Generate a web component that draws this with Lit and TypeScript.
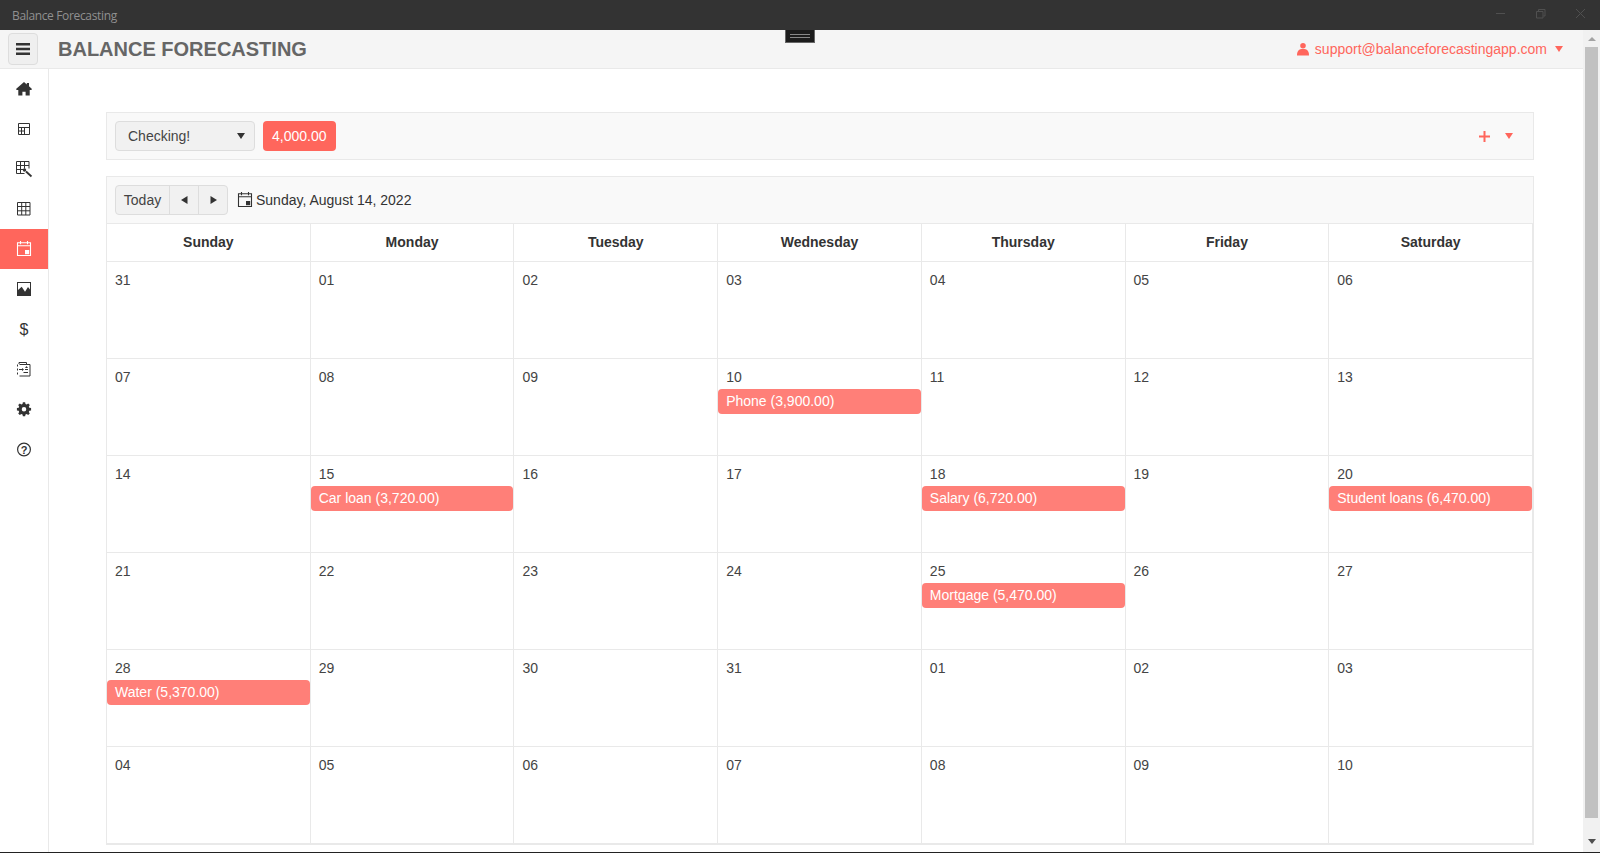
import { LitElement, html, css, svg } from "lit";
import { customElement } from "lit/decorators.js";

const DAYS = ["Sunday", "Monday", "Tuesday", "Wednesday", "Thursday", "Friday", "Saturday"];
const NUMS = [
  "31","01","02","03","04","05","06",
  "07","08","09","10","11","12","13",
  "14","15","16","17","18","19","20",
  "21","22","23","24","25","26","27",
  "28","29","30","31","01","02","03",
  "04","05","06","07","08","09","10",
];
const EVENTS: Record<number, string> = {
  10: "Phone (3,900.00)",
  15: "Car loan (3,720.00)",
  18: "Salary (6,720.00)",
  20: "Student loans (6,470.00)",
  25: "Mortgage (5,470.00)",
  28: "Water (5,370.00)",
};

const CALENDAR = svg`<path fill="none" stroke="currentColor" stroke-width="1.100" d="M1.500 1.800h13v12.700h-13zM1.500 4.800h13M4.500 0v3.300M11.500 0v3.300"/><path fill="currentColor" d="M9 9h4.200v4.200H9z"/>`;

const ICONS = [
  svg`<path fill="currentColor" d="M8 1 10.800 3.400V2h2.200v3.300L16 8.100 15.300 9H13.700V14.500H9.600v-3.700H6.400v3.700H2.300V9H.7L0 8.100z"/>`,
  svg`<path fill="none" stroke="currentColor" d="M2.500 2.500h11v11h-11zM2.500 6.500h11M2.500 10h6M5.500 6.500v7M8.500 6.500v7"/>`,
  svg`<path fill="none" stroke="currentColor" d="M8.500 12.500H.5v-12h12.500v7M.5 4.500h12.500M.5 8.500h7M4.500.5v12M8.500.5v7"/><circle cx="8.500" cy="9" r="1.700" fill="currentColor"/><path stroke="currentColor" stroke-width="1.800" d="M10 10.500 15.500 15.500"/>`,
  svg`<path fill="none" stroke="currentColor" d="M1.500 1.500h12.500v12.500h-12.500zM1.500 5.500h12.500M1.500 9.800h12.500M5.700 1.500v12.500M9.800 1.500v12.500"/>`,
  CALENDAR,
  svg`<path fill="currentColor" fill-rule="evenodd" d="M1 1h14v14H1zM2 2V9L5.700 5.700 9 10.700 12 6l2 2.500V2z"/>`,
  svg`<text x="8" y="13.500" text-anchor="middle" font-family="Liberation Sans, sans-serif" font-size="16" fill="currentColor">$</text>`,
  svg`<path fill="none" stroke="currentColor" d="M3 3V1.500h7.500V3M3.500 3.500h10.500v11.500H3.500M1.500 3.500v2M1.500 7.500v2M1.500 11.500v2"/><path stroke="currentColor" d="M3 8.500h4M7.500 11.500h4.500M9 8.500h3"/><path fill="currentColor" d="M6 7l2 1.500L6 10zM10.500 5l1.500 2H9z"/>`,
  svg`<path fill="currentColor" fill-rule="evenodd" transform="translate(1 .3) scale(.875)" d="M6.700 1h2.600l.4 2 1.300.6 1.800-1.100 1.800 1.800-1.100 1.800.6 1.300 2 .4v2.600l-2 .4-.6 1.300 1.100 1.800-1.800 1.800-1.800-1.100-1.300.6-.4 2H6.700l-.4-2-1.300-.6-1.800 1.100-1.800-1.800 1.100-1.800-.6-1.300-2-.4V7.800l2-.4.6-1.300-1.100-1.800 1.800-1.800 1.800 1.100 1.300-.6zM8 6.400a2.600 2.600 0 1 0 0 5.200 2.600 2.600 0 0 0 0-5.200z"/>`,
  svg`<circle cx="8" cy="8.500" r="6.400" fill="none" stroke="currentColor" stroke-width="1.200"/><text x="8" y="12.500" text-anchor="middle" font-family="Liberation Sans, sans-serif" font-weight="700" font-size="11" fill="currentColor">?</text>`,
];

@customElement("app-root")
export class AppRoot extends LitElement {
  static styles = css`
    :host {
      display: flex;
      flex-direction: column;
      height: 853px;
      overflow: hidden;
      position: relative;
      font-family: "Liberation Sans", Arial, sans-serif;
      font-size: 14px;
      color: #333;
      background: #fff;
    }
    .titlebar {
      height: 30px;
      flex: none;
      background: #333;
      display: flex;
      align-items: center;
      padding-left: 12px;
      font: 12px "Open Sans", sans-serif;
      letter-spacing: -0.35px;
      color: #909090;
    }
    .win { margin-left: auto; display: flex; }
    .win svg { width: 40px; height: 30px; display: block; }
    .app { flex: 1; display: flex; min-height: 0; }
    .main { flex: 1; display: flex; flex-direction: column; min-width: 0; }
    .header {
      height: 39px;
      flex: none;
      box-sizing: border-box;
      background: #f5f5f5;
      border-bottom: 1px solid #e9e9e9;
      display: flex;
      align-items: center;
      padding: 0 20px 0 8px;
    }
    .burger {
      width: 30px;
      height: 32px;
      box-sizing: border-box;
      border: 1px solid #ddd;
      border-radius: 4px;
      background: #efefef;
      display: flex;
      align-items: center;
      justify-content: center;
    }
    .burger svg { width: 14px; height: 14px; display: block; }
    .brand {
      margin-left: 20px;
      font-size: 20px;
      font-weight: 700;
      color: #666;
    }
    .user {
      margin-left: auto;
      display: flex;
      align-items: center;
      color: #ff665c;
    }
    .user svg { width: 12px; height: 14px; margin-right: 6px; }
    .caret { width: 0; height: 0; border-style: solid; border-width: 6px 4px 0; border-color: #ff665c transparent transparent; }
    .user .caret { margin-left: 8px; }
    .content { flex: 1; display: flex; min-height: 0; }
    .side {
      width: 49px;
      flex: none;
      box-sizing: border-box;
      border-right: 1px solid #e9e9e9;
    }
    .nav {
      height: 40px;
      display: flex;
      align-items: center;
      justify-content: center;
      color: #333;
    }
    .nav svg { width: 16px; height: 16px; display: block; overflow: visible; }
    .nav.on { background: #ff665c; color: #fff; }
    .page {
      flex: 1;
      min-width: 0;
      padding: 43px 49px 0 57px;
    }
    .bar {
      box-sizing: border-box;
      border: 1px solid #e9e9e9;
      background: #f9f9f9;
      display: flex;
      align-items: center;
      padding: 0 8px;
    }
    .top { height: 48px; gap: 8px; }
    .select {
      width: 140px;
      height: 30px;
      box-sizing: border-box;
      border: 1px solid #ddd;
      border-radius: 4px;
      background: #f1f1f1;
      display: flex;
      align-items: center;
      justify-content: space-between;
      padding: 0 9px 0 12px;
      color: #444;
    }
    .select .caret { border-color: #333 transparent transparent; }
    .badge {
      height: 30px;
      padding: 0 9px;
      display: flex;
      align-items: center;
      border-radius: 4px;
      background: #ff665c;
      color: #fff;
    }
    .tools { margin-left: auto; display: flex; align-items: center; gap: 15px; padding-right: 12px; }
    .tools svg { width: 11px; height: 11px; display: block; }
    .calendar { margin-top: 16px; }
    .nav-bar { height: 48px; }
    .group {
      display: flex;
      height: 30px;
      box-sizing: border-box;
      border: 1px solid #ddd;
      border-radius: 4px;
      background: #f1f1f1;
      color: #444;
    }
    .group > div { display: flex; align-items: center; justify-content: center; box-sizing: border-box; }
    .group .today { width: 53px; }
    .group .arrow { width: 29px; border-left: 1px solid #ddd; }
    .group svg { width: 7px; height: 8px; }
    .date { display: flex; align-items: center; margin-left: 9px; color: #333; }
    .date svg { width: 16px; height: 16px; margin-right: 3px; }
    .grid {
      box-sizing: border-box;
      display: grid;
      grid-template-columns: repeat(7, 1fr);
      border: solid #e9e9e9;
      border-width: 0 1px 1px 1px;
    }
    .head {
      height: 38px;
      box-sizing: border-box;
      display: flex;
      align-items: center;
      justify-content: center;
      font-weight: 700;
      padding-bottom: 2px;
      border-bottom: 1px solid #e9e9e9;
      border-right: 1px solid #e9e9e9;
    }
    .cell {
      height: 97px;
      box-sizing: border-box;
      border-right: 1px solid #e9e9e9;
      border-bottom: 1px solid #e9e9e9;
      padding-top: 8px;
      line-height: 20px;
      color: #444;
    }
    .num { padding-left: 8px; height: 22px; }
    .event {
      height: 25px;
      padding-left: 8px;
      border-radius: 4px;
      background: #ff7f78;
      color: #fff;
      line-height: 24px;
    }
    .scroll {
      width: 17px;
      flex: none;
      background: #f1f1f1;
      display: flex;
      flex-direction: column;
      align-items: center;
    }
    .scroll .up, .scroll .down { width: 0; height: 0; border-style: solid; }
    .scroll .up { border-width: 0 4px 4px; border-color: transparent transparent #a3a3a3; margin-top: 7px; }
    .thumb { width: 13px; height: 771px; margin-top: 6px; background: #c1c1c1; }
    .scroll .down { border-width: 5px 4px 0; border-color: #505050 transparent transparent; margin-top: 21px; }
    .baseline { height: 1px; flex: none; background: #222; }
    .handle {
      position: absolute;
      left: 785px;
      top: 30px;
      width: 30px;
      height: 13px;
      box-sizing: border-box;
      background: #1c1c1c;
      border: 1px solid #666;
      border-top-width: 0;
      display: flex;
      flex-direction: column;
      align-items: center;
      justify-content: center;
      gap: 2px;
    }
    .handle i { display: block; width: 20px; height: 1px; background: #888; }
  `;

  render() {
    return html`
      <div class="titlebar">
        Balance Forecasting
        <div class="win">
          <svg viewBox="0 0 40 30"><path stroke="#505050" d="M16 13.500h9"/></svg>
          <svg viewBox="0 0 40 30"><path fill="none" stroke="#505050" d="M16.500 11.500h6.500v6.500h-6.500zM18.500 11V9.500h6.500v6.500h-1.500"/></svg>
          <svg viewBox="0 0 40 30"><path stroke="#505050" d="M16 9l9 9M25 9l-9 9"/></svg>
        </div>
      </div>
      <div class="app">
        <div class="main">
          <div class="header">
            <div class="burger">
              <svg viewBox="0 0 14 14"><path fill="#333" d="M0 1h14v2.500H0zM0 5.800h14v2.500H0zM0 10.500h14V13H0z"/></svg>
            </div>
            <div class="brand">BALANCE FORECASTING</div>
            <div class="user">
              <svg viewBox="0 0 13 14"><circle cx="6.500" cy="3.500" r="3" fill="#ff665c"/><path fill="#ff665c" d="M0 14c0-5 2-7 6.500-7s6.500 2 6.500 7z"/></svg>
              support@balanceforecastingapp.com
              <span class="caret"></span>
            </div>
          </div>
          <div class="content">
            <nav class="side">
              ${ICONS.map(
                (icon, i) => html`<div class="nav ${i === 4 ? "on" : ""}"><svg viewBox="0 0 16 16">${icon}</svg></div>`
              )}
            </nav>
            <main class="page">
              <div class="bar top">
                <div class="select">Checking!<span class="caret"></span></div>
                <div class="badge">4,000.00</div>
                <div class="tools">
                  <svg viewBox="0 0 11 11"><path stroke="#ff665c" stroke-width="2" d="M5.500 0v11M0 5.500h11"/></svg>
                  <span class="caret"></span>
                </div>
              </div>
              <div class="calendar">
                <div class="bar nav-bar">
                  <div class="group">
                    <div class="today">Today</div>
                    <div class="arrow"><svg viewBox="0 0 7 8"><path fill="#333" d="M6.500 0v8L0 4z"/></svg></div>
                    <div class="arrow"><svg viewBox="0 0 7 8"><path fill="#333" d="M.500 0v8L7 4z"/></svg></div>
                  </div>
                  <div class="date">
                    <svg viewBox="0 0 16 16">${CALENDAR}</svg>
                    Sunday, August 14, 2022
                  </div>
                </div>
                <div class="grid">
                  ${DAYS.map((d) => html`<div class="head">${d}</div>`)}
                  ${NUMS.map(
                    (n, i) => html`<div class="cell">
                      <div class="num">${n}</div>
                      ${EVENTS[i] ? html`<div class="event">${EVENTS[i]}</div>` : ""}
                    </div>`
                  )}
                </div>
              </div>
            </main>
          </div>
        </div>
        <div class="scroll">
          <span class="up"></span>
          <div class="thumb"></div>
          <span class="down"></span>
        </div>
      </div>
      <div class="baseline"></div>
      <div class="handle"><i></i><i></i></div>
    `;
  }
}
